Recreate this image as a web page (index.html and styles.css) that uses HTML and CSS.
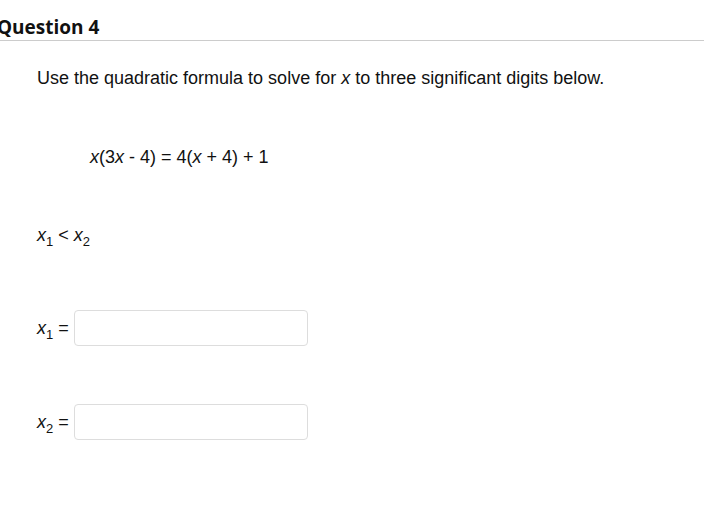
FILE: index.html
```html
<!DOCTYPE html>
<html>
<head>
<meta charset="utf-8">
<link rel="stylesheet" href="styles.css">
</head>
<body>
<div class="header"><h2 class="title">Question 4</h2></div>
<div class="content">
  <p class="prompt">Use the quadratic formula to solve for <i>x</i> to three significant digits below.</p>
  <p class="equation"><i>x</i>(3<i>x</i> - 4) = 4(<i>x</i> + 4) + 1</p>
  <p class="order"><i>x</i><sub>1</sub> &lt; <i>x</i><sub>2</sub></p>
  <div class="row row-first">
    <span class="label"><i>x</i><sub>1</sub> =</span>
    <span class="field"></span>
  </div>
  <div class="row row-second">
    <span class="label"><i>x</i><sub>2</sub> =</span>
    <span class="field"></span>
  </div>
</div>
</body>
</html>
```
FILE: styles.css
```css
html, body {
  margin: 0;
  padding: 0;
  background: #ffffff;
}
body {
  font-family: "Liberation Sans", Arial, sans-serif;
  font-size: 18px;
  color: #111111;
  width: 704px;
  height: 506px;
  overflow: hidden;
}
.header {
  height: 40px;
  border-bottom: 1px solid #cccccc;
  display: flex;
  align-items: flex-end;
}
.title {
  margin: 0 0 1px -3px;
  font-family: "Open Sans", sans-serif;
  font-weight: 700;
  font-size: 19px;
  line-height: 24px;
  color: #111;
}
.content {
  padding-left: 37px;
}
p {
  margin: 0;
  line-height: 21px;
}
i {
  font-style: italic;
}
sub {
  font-size: 13px;
  line-height: 0;
  vertical-align: -5px;
}
.prompt {
  margin-top: 27px;
}
.equation {
  margin-top: 58px;
  padding-left: 53px;
}
.order {
  margin-top: 57px;
}
.row {
  display: flex;
  align-items: center;
  gap: 5px;
}
.row-first {
  margin-top: 64px;
}
.row-second {
  margin-top: 58px;
}
.label {
  line-height: 21px;
  white-space: nowrap;
}
.field {
  width: 232px;
  height: 34px;
  border: 1px solid #dddddd;
  border-radius: 4px;
  background: #fff;
}
```
